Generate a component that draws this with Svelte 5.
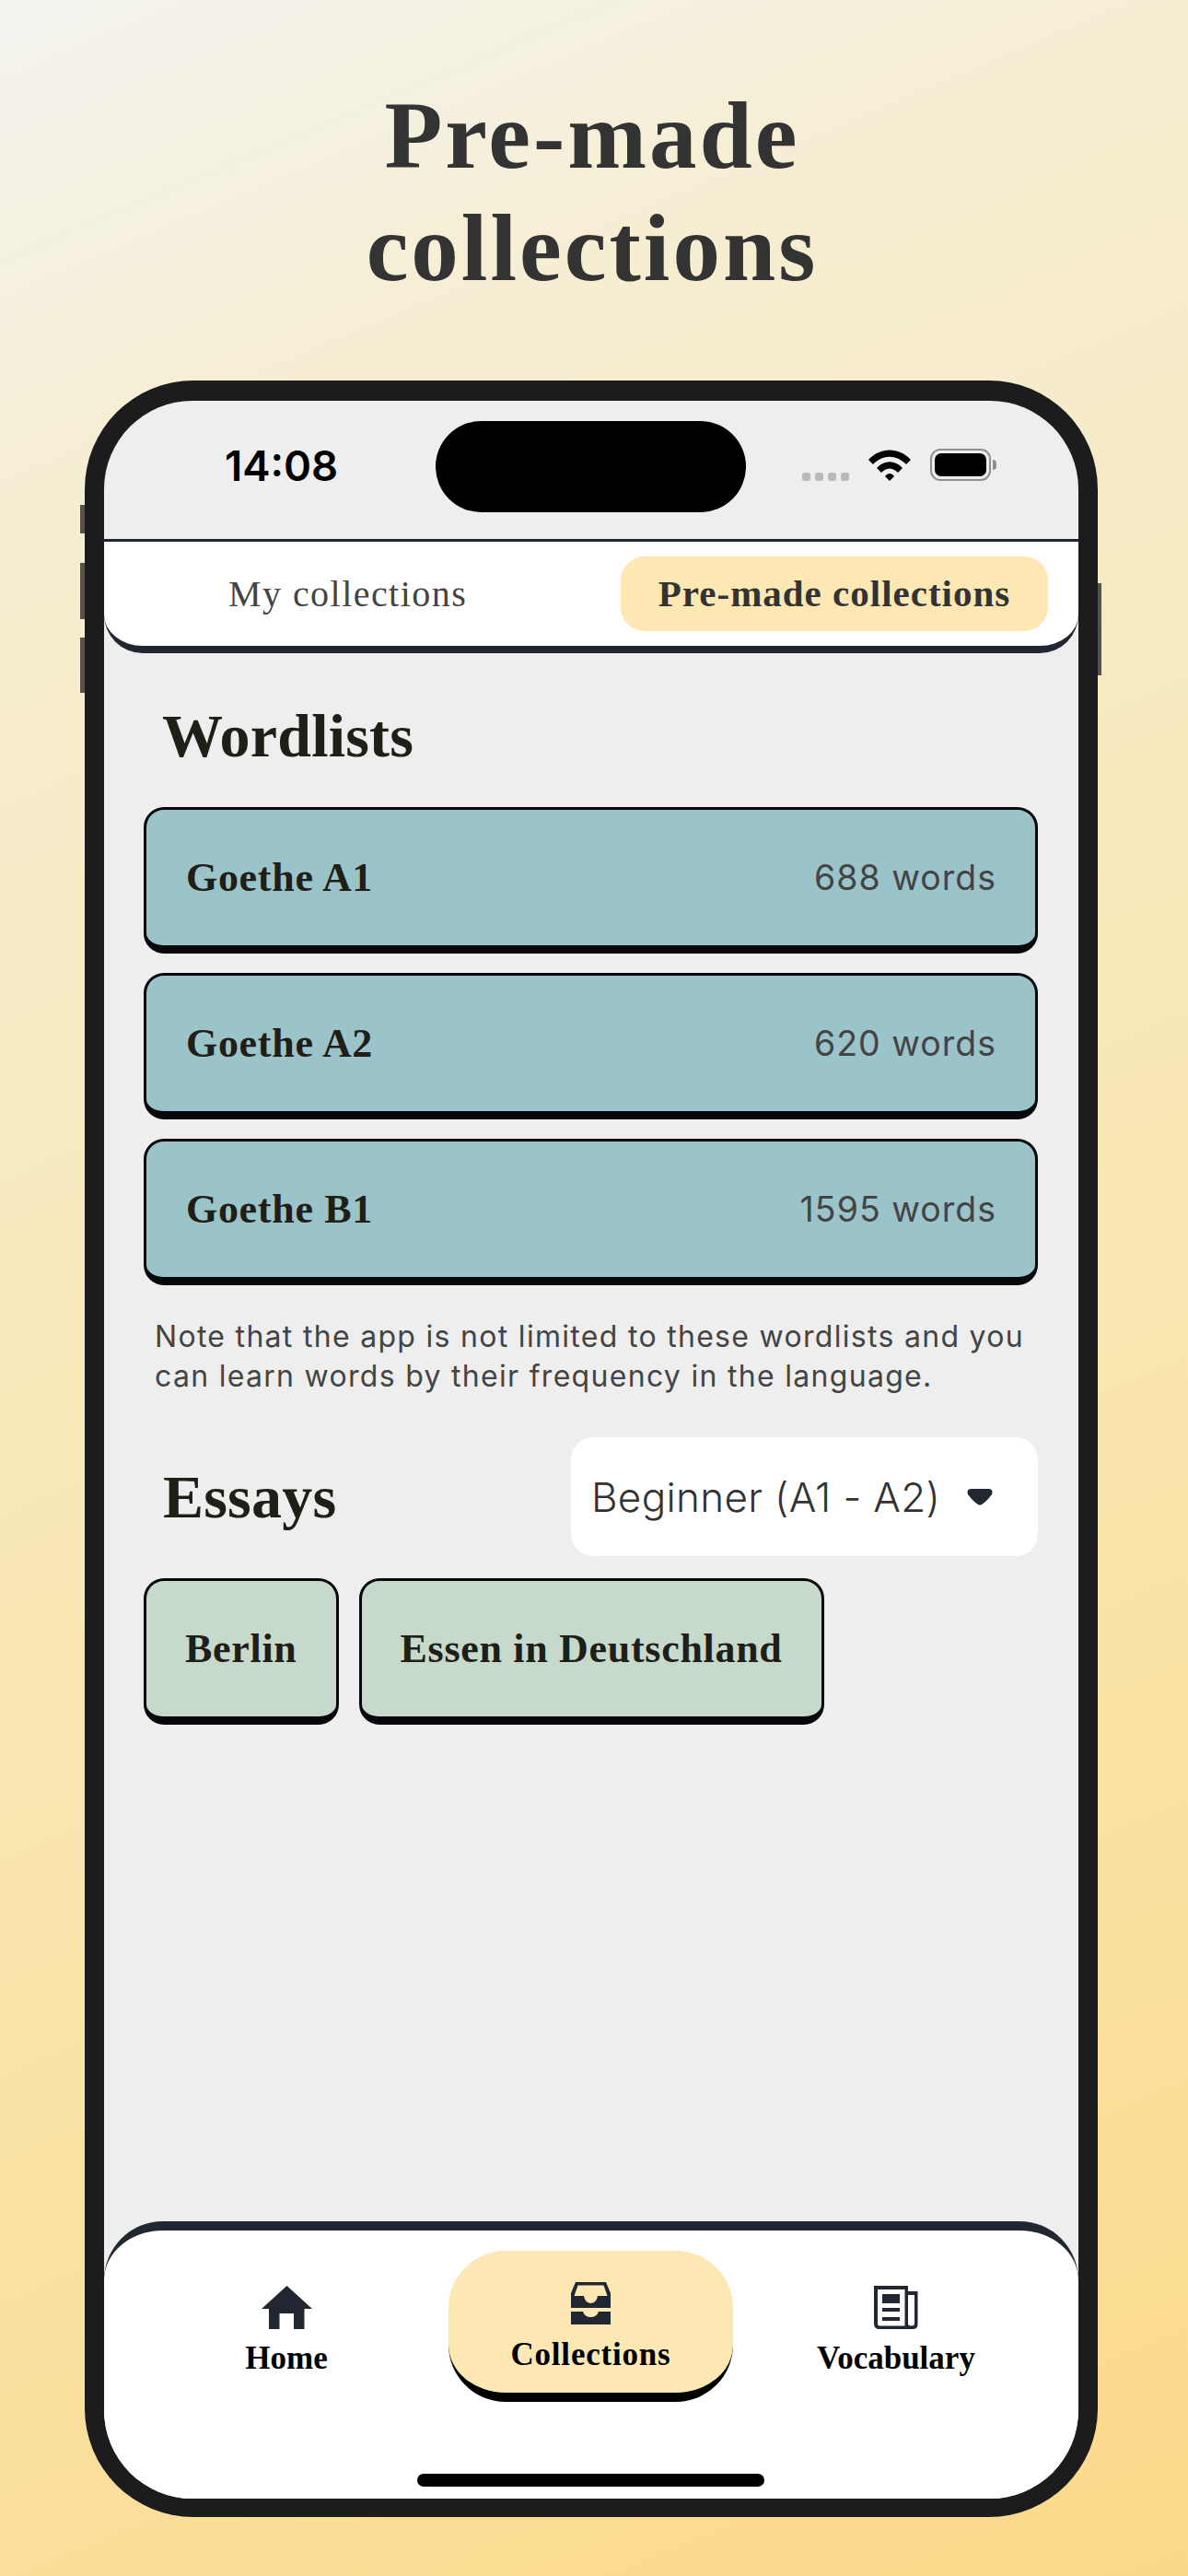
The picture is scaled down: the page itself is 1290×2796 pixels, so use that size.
<script>
	const wordlists = [
		{ name: 'Goethe A1', count: '688 words' },
		{ name: 'Goethe A2', count: '620 words' },
		{ name: 'Goethe B1', count: '1595 words' }
	];
	const essays = ['Berlin', 'Essen in Deutschland'];
</script>

<main class="page">
	<h1>Pre-made<br />collections</h1>

	<div class="phone">
		<span class="btn b1"></span>
		<span class="btn b2"></span>
		<span class="btn b3"></span>
		<span class="btn b4"></span>

		<div class="screen">
			<div class="status">
				<span class="time">14:08</span>
				<span class="island"></span>
				<div class="status-icons">
					<span class="dots"><i></i><i></i><i></i><i></i></span>
					<svg width="46" height="34" viewBox="0 0 46 34">
						<path d="M0 11 C13 -3 33 -3 46 11 L41 16 C30 5 16 5 5 16 Z" fill="#000" />
						<path d="M9 20 C17 11 29 11 37 20 L32 25 C26 19 20 19 14 25 Z" fill="#000" />
						<path d="M18 29 C21 25 25 25 28 29 L23 34 Z" fill="#000" />
					</svg>
					<span class="battery"><b></b></span>
				</div>
			</div>

			<div class="tabs">
				<div class="tab">My collections</div>
				<div class="tab active">Pre-made collections</div>
			</div>

			<div class="content">
				<h2 class="wordlists-title">Wordlists</h2>
				<div class="list">
					{#each wordlists as w}
						<div class="card blue">
							<span class="name">{w.name}</span>
							<span class="count">{w.count}</span>
						</div>
					{/each}
				</div>
				<p class="note">Note that the app is not limited to these wordlists and you can learn words by their frequency in the language.</p>

				<div class="essays-head">
					<h2>Essays</h2>
					<div class="select">
						<span>Beginner (A1 - A2)</span>
						<svg width="28" height="18" viewBox="0 0 28 18">
							<path d="M5 0 H23 Q29 0 27 6 Q21 14 16 17 Q14 18 12 17 Q7 14 1 6 Q-1 0 5 0 Z" fill="#202731" />
						</svg>
					</div>
				</div>

				<div class="chips">
					{#each essays as e}
						<div class="card green"><span class="name">{e}</span></div>
					{/each}
				</div>
			</div>

			<nav class="bar">
				<div class="item home">
					<svg width="55" height="47" viewBox="0 0 55 47">
						<path d="M27.5 0 L55 25 H46.5 V47 H35 V30 H19.5 V47 H8 V25 H0 Z" fill="#202731" />
					</svg>
					<span>Home</span>
				</div>
				<div class="item current">
					<svg width="43" height="46" viewBox="0 0 43 46">
						<path fill-rule="evenodd" d="M5 0 H38 L43 12 V28 H0 V12 Z M7.5 3.5 L3.5 15 H14 Q15 22 21.5 23 Q28 22 29 15 H39.5 L35.5 3.5 Z" fill="#202731" />
						<path d="M0 32 H13 Q15 38 21.5 38 Q28 38 30 32 H43 V46 H0 Z" fill="#202731" />
					</svg>
					<span>Collections</span>
				</div>
				<div class="item vocab">
					<svg width="48" height="47" viewBox="0 0 48 47">
						<path fill-rule="evenodd" d="M0 0 H37 V6 H47.5 V42 Q47.5 47 42 47 H6 Q0 47 0 41 Z M4 4 V41 Q4 43.5 6.5 43.5 H33.5 V4 Z M37 10 V41 Q37 43.5 40.5 43.5 Q44 43.5 44 41 V10 Z" fill="#202731" />
						<path d="M9 9 H28 V19 H9 Z M9 24 H28 V28 H9 Z M9 34 H28 V38 H9 Z" fill="#202731" />
					</svg>
					<span>Vocabulary</span>
				</div>
				<span class="home-indicator"></span>
			</nav>
		</div>
	</div>
</main>

<style>
	:global(body) {
		margin: 0;
	}
	.page {
		width: 1290px;
		height: 2796px;
		box-sizing: border-box;
		padding-top: 86px;
		overflow: hidden;
		background: linear-gradient(157deg, #f3f3ef 0%, #f6eed2 17%, #f9e5ae 60%, #fbd98a 100%);
		font-family: "Liberation Serif", serif;
	}
	h1 {
		margin: 0;
		height: 327px;
		padding-right: 4px;
		text-align: center;
		font-size: 103px;
		line-height: 122px;
		font-weight: 700;
		letter-spacing: 3px;
		color: #333333;
	}
	.phone {
		position: relative;
		width: 1100px;
		height: 2319px;
		margin-left: 92px;
		box-sizing: border-box;
		padding: 22px 21px 20px;
		background: #1c1c1e;
		border-radius: 118px;
	}
	.btn {
		position: absolute;
		width: 5px;
		background: #55534f;
	}
	.b1 { left: -5px; top: 135px; height: 31px; }
	.b2 { left: -5px; top: 198px; height: 61px; }
	.b3 { left: -5px; top: 279px; height: 60px; }
	.b4 { right: -4px; top: 220px; height: 100px; width: 4px; }
	.screen {
		height: 100%;
		display: flex;
		flex-direction: column;
		overflow: hidden;
		background: #eeeeee;
		border-radius: 96px;
	}
	.status {
		position: relative;
		height: 153px;
		flex: none;
		box-sizing: border-box;
		border-bottom: 3px solid #202731;
	}
	.time {
		position: absolute;
		left: 131px;
		top: 44px;
		font-family: Inter, sans-serif;
		font-weight: 600;
		font-size: 45.5px;
		line-height: 54px;
		color: #000;
	}
	.island {
		position: absolute;
		left: 360px;
		top: 22px;
		width: 337px;
		height: 99px;
		border-radius: 50px;
		background: #000;
	}
	.status-icons {
		position: absolute;
		left: 758px;
		top: 52px;
		display: flex;
		align-items: flex-end;
		gap: 21px;
	}
	.dots {
		display: flex;
		gap: 5px;
	}
	.dots i {
		width: 9px;
		height: 9px;
		border-radius: 3px;
		background: #b9b9b9;
	}
	.battery {
		position: relative;
		width: 66px;
		height: 35px;
		box-sizing: border-box;
		border: 2px solid #8f8f8f;
		border-radius: 11px;
		padding: 3px;
	}
	.battery::after {
		content: "";
		position: absolute;
		right: -8px;
		top: 10px;
		width: 4px;
		height: 11px;
		border-radius: 0 4px 4px 0;
		background: #8f8f8f;
	}
	.battery b {
		display: block;
		height: 100%;
		border-radius: 7px;
		background: #000;
	}
	.tabs {
		flex: none;
		display: flex;
		justify-content: space-between;
		align-items: center;
		height: 121px;
		box-sizing: border-box;
		padding: 0 33px 0 135px;
		background: #fff;
		border-bottom: 8px solid #202731;
		border-radius: 0 0 42px 42px;
	}
	.tab {
		font-size: 40px;
		letter-spacing: 1.45px;
		color: #444;
	}
	.tab.active {
		width: 464px;
		height: 81px;
		line-height: 81px;
		text-align: center;
		background: #fde8b4;
		border-radius: 26px;
		font-size: 41px;
		letter-spacing: 1px;
		font-weight: 700;
		color: #333;
	}
	.content {
		flex: 1;
		min-height: 0;
		padding: 0 44px 0 43px;
	}
	h2 {
		margin: 0;
		font-size: 66px;
		letter-spacing: 0.2px;
		font-weight: 700;
		color: #1f1e17;
	}
	.wordlists-title {
		height: 167px;
		box-sizing: border-box;
		padding: 50px 0 0 20px;
		line-height: 80px;
	}
	.list {
		display: flex;
		flex-direction: column;
		gap: 21px;
	}
	.card {
		height: 159px;
		box-sizing: border-box;
		display: flex;
		align-items: center;
		justify-content: space-between;
		border: 3px solid #05070a;
		border-bottom-width: 9px;
		border-radius: 22px;
	}
	.blue {
		padding: 0 42px 0 43px;
		background: #9bc3ca;
	}
	.green {
		padding: 0 42px;
		background: #c6d9cb;
	}
	.name {
		font-size: 44px;
		letter-spacing: 0.7px;
		font-weight: 700;
		color: #1f1e17;
	}
	.count {
		font-family: Inter, sans-serif;
		font-size: 37.5px;
		letter-spacing: 1px;
		color: #444;
	}
	.note {
		margin: 34px 0 0 12px;
		font-family: Inter, sans-serif;
		font-size: 32px;
		line-height: 43px;
		letter-spacing: 1.3px;
		color: #444;
	}
	.essays-head {
		display: flex;
		align-items: center;
		justify-content: space-between;
		margin-top: 45px;
	}
	.essays-head h2 {
		padding-left: 21px;
	}
	.select {
		width: 507px;
		height: 129px;
		box-sizing: border-box;
		display: flex;
		align-items: center;
		gap: 29px;
		padding-left: 22px;
		background: #fff;
		border-radius: 24px;
	}
	.select span {
		font-family: Inter, sans-serif;
		font-weight: 300;
		font-size: 44px;
		letter-spacing: 0.3px;
		color: #333;
	}
	.chips {
		display: flex;
		gap: 22px;
		margin-top: 24px;
	}
	.bar {
		position: relative;
		flex: none;
		height: 301px;
		box-sizing: border-box;
		background: #fff;
		border-top: 10px solid #202731;
		border-radius: 64px 64px 0 0;
	}
	.item {
		position: absolute;
		display: flex;
		flex-direction: column;
		align-items: center;
		font-size: 35px;
		font-weight: 700;
		color: #000;
	}
	.item span {
		line-height: 40px;
	}
	.home {
		left: 150px;
		width: 96px;
		top: 60px;
		gap: 12px;
	}
	.vocab {
		left: 770px;
		width: 180px;
		top: 60px;
		gap: 12px;
	}
	.current {
		left: 374px;
		top: 22px;
		width: 309px;
		height: 164px;
		box-sizing: border-box;
		padding-top: 34px;
		gap: 13px;
		background: #fde8b4;
		border-bottom: 10px solid #000;
		border-radius: 62px;
	}
	.current span {
		letter-spacing: 0.8px;
	}
	.home-indicator {
		position: absolute;
		left: 340px;
		top: 264px;
		width: 377px;
		height: 14px;
		border-radius: 7px;
		background: #000;
	}
</style>
